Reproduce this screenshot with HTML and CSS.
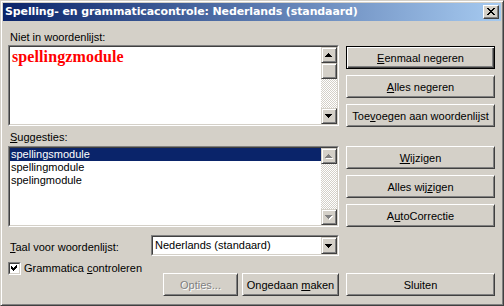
FILE: index.html
```html
<!DOCTYPE html>
<html lang="nl">
<head>
<meta charset="UTF-8">
<title>Spelling- en grammaticacontrole</title>
<link rel="stylesheet" href="styles.css">
</head>
<body>
<div class="window">
    <div class="titlebar">
        <span class="title">Spelling- en grammaticacontrole: Nederlands (standaard)</span>
        <span class="close-btn">
            <svg width="8" height="7" viewBox="0 0 8 7"><path d="M0 0h2v1h-2zM6 0h2v1h-2zM1 1h2v1h-2zM5 1h2v1h-2zM2 2h4v1h-4zM3 3h2v1h-2zM2 4h4v1h-4zM1 5h2v1h-2zM5 5h2v1h-2zM0 6h2v1h-2zM6 6h2v1h-2z" fill="#000"/></svg>
        </span>
    </div>

    <div class="dialog">
        <div class="left">
            <div class="label label-top">Niet in woordenlijst:</div>
            <div class="field field-big">
                <div class="field-inner">
                    <div class="field-text"><span class="wrong">spellingzmodule</span></div>
                    <div class="scrollbar">
                        <div class="sb-btn">
                            <svg class="arr-up" width="7" height="4" viewBox="0 0 7 4"><path d="M3 0h1v1h1v1h1v1h1v1h-7v-1h1v-1h1v-1h1z" fill="#000"/></svg>
                        </div>
                        <div class="sb-btn"></div>
                        <div class="track"></div>
                        <div class="sb-btn">
                            <svg class="arr-down" width="7" height="4" viewBox="0 0 7 4"><path d="M0 0h7v1h-1v1h-1v1h-1v1h-1v-1h-1v-1h-1v-1h-1z" fill="#000"/></svg>
                        </div>
                    </div>
                </div>
            </div>

            <div class="label label-sugg"><u>S</u>uggesties:</div>
            <div class="field field-big">
                <div class="field-inner">
                    <ul class="suggestions">
                        <li class="selected">spellingsmodule</li>
                        <li>spellingmodule</li>
                        <li>spelingmodule</li>
                    </ul>
                    <div class="scrollbar">
                        <div class="sb-btn">
                            <svg class="arr-up" width="8" height="5" viewBox="0 0 8 5"><path d="M4 1h1v1h1v1h1v1h1v1h-7v-1h1v-1h1v-1h1z" fill="#fff"/><path d="M3 0h1v1h1v1h1v1h1v1h-7v-1h1v-1h1v-1h1z" fill="#808080"/></svg>
                        </div>
                        <div class="track"></div>
                        <div class="sb-btn">
                            <svg class="arr-down" width="8" height="5" viewBox="0 0 8 5"><path d="M1 1h7v1h-1v1h-1v1h-1v1h-1v-1h-1v-1h-1v-1h-1z" fill="#fff"/><path d="M0 0h7v1h-1v1h-1v1h-1v1h-1v-1h-1v-1h-1v-1h-1z" fill="#808080"/></svg>
                        </div>
                    </div>
                </div>
            </div>

            <div class="lang-row">
                <span class="lang-label"><u>T</u>aal voor woordenlijst:</span>
                <div class="field combo">
                    <div class="field-inner">
                        <span class="combo-text">Nederlands (standaard)</span>
                        <div class="sb-btn combo-btn">
                            <svg class="arr-down" width="7" height="4" viewBox="0 0 7 4"><path d="M0 0h7v1h-1v1h-1v1h-1v1h-1v-1h-1v-1h-1v-1h-1z" fill="#000"/></svg>
                        </div>
                    </div>
                </div>
            </div>

            <div class="check-row">
                <span class="field checkbox">
                    <span class="field-inner">
                        <svg width="9" height="9" viewBox="0 0 9 9"><path d="M1 2h1v1h1v1h1v-1h1v-1h1v-1h1v3h-1v1h-1v1h-1v1h-1v-1h-1v-1h-1z" fill="#000"/></svg>
                    </span>
                </span>
                <span>Grammatica <u>c</u>ontroleren</span>
            </div>

            <div class="bottom-row">
                <div class="btn btn-options disabled"><span>Opties...</span></div>
                <div class="btn btn-undo"><span>Ongedaan <u>m</u>aken</span></div>
            </div>
        </div>

        <div class="right">
            <div class="btn default first"><span><u>E</u>enmaal negeren</span></div>
            <div class="btn"><span><u>A</u>lles negeren</span></div>
            <div class="btn"><span>Toe<u>v</u>oegen aan woordenlijst</span></div>
            <div class="btn group2"><span><u>W</u>ijzigen</span></div>
            <div class="btn"><span>Alles wij<u>z</u>igen</span></div>
            <div class="btn"><span>A<u>u</u>toCorrectie</span></div>
            <div class="btn close"><span>Sluiten</span></div>
        </div>
    </div>
</div>
</body>
</html>
```

FILE: styles.css
```css
body {
    margin: 0;
    padding: 0;
    font-family: "Liberation Sans", Arial, sans-serif;
    font-size: 11px;
    color: #000;
    background-color: #d4d0c8;
}

/* venster */
.window {
    width: 504px;
    height: 306px;
    box-sizing: border-box;
    background-color: #d4d0c8;
    border: 1px solid;
    border-color: #d4d0c8 #404040 #404040 #d4d0c8;
    box-shadow: inset 1px 1px #fff, inset -1px -1px #808080;
    padding: 2px;
}

.titlebar {
    height: 18px;
    display: flex;
    align-items: center;
    justify-content: space-between;
    background: linear-gradient(to right, #0a246a, #a6caf0);
}

.title {
    padding-left: 2px;
    color: #fff;
    font-family: "DejaVu Sans", sans-serif;
    font-weight: bold;
    font-size: 11px;
    letter-spacing: -0.12px;
    line-height: 18px;
    white-space: nowrap;
}

.close-btn {
    width: 16px;
    height: 14px;
    box-sizing: border-box;
    margin-right: 2px;
    background: #d4d0c8;
    border: 1px solid;
    border-color: #fff #404040 #404040 #fff;
    box-shadow: inset -1px -1px #808080;
    display: flex;
}

.close-btn svg {
    display: block;
    margin: 2px 0 0 3px;
}

/* inhoud */
.dialog {
    display: flex;
    gap: 7px;
    padding: 0 6px 0 5px;
}

.left {
    width: 331px;
    display: flex;
    flex-direction: column;
}

.right {
    width: 149px;
    display: flex;
    flex-direction: column;
}

.label {
    height: 13px;
    line-height: 13px;
    padding-left: 2px;
    white-space: nowrap;
}

.label-top {
    margin-top: 10px;
    margin-bottom: 1px;
}

.label-sugg {
    margin-top: 5px;
    margin-bottom: 2px;
}

/* verzonken velden */
.field {
    box-sizing: border-box;
    border: 1px solid;
    border-color: #808080 #fff #fff #808080;
    background: #fff;
}

.field-inner {
    box-sizing: border-box;
    height: 100%;
    border: 1px solid;
    border-color: #404040 #d4d0c8 #d4d0c8 #404040;
    display: flex;
}

.field-big {
    height: 81px;
}

.field-text {
    flex: 1;
    padding: 1px 2px;
}

.wrong {
    font-family: "Liberation Serif", "Times New Roman", serif;
    font-weight: bold;
    font-size: 16px;
    line-height: 18px;
    letter-spacing: 0.1px;
    color: #ff0000;
}

.suggestions {
    flex: 1;
    list-style: none;
    margin: 0;
    padding: 0;
}

.suggestions li {
    height: 13px;
    line-height: 13px;
    padding-left: 1px;
}

.suggestions li.selected {
    background: #0a246a;
    color: #fff;
}

/* schuifbalk */
.scrollbar {
    width: 16px;
    display: flex;
    flex-direction: column;
}

.sb-btn {
    width: 16px;
    height: 16px;
    box-sizing: border-box;
    flex: none;
    background: #d4d0c8;
    border: 1px solid;
    border-color: #d4d0c8 #404040 #404040 #d4d0c8;
    box-shadow: inset 1px 1px #fff, inset -1px -1px #808080;
}

.sb-btn svg {
    display: block;
}

.arr-up {
    margin: 5px 0 0 3px;
}

.arr-down {
    margin: 5px 0 0 3px;
}

.track {
    flex: 1;
    background: conic-gradient(#fff 25%, #d4d0c8 0 50%, #fff 0 75%, #d4d0c8 0);
    background-size: 2px 2px;
}

/* taal */
.lang-row {
    margin-top: 8px;
    display: flex;
    align-items: center;
}

.lang-label {
    width: 143px;
    padding-left: 2px;
    padding-top: 2px;
    box-sizing: border-box;
    white-space: nowrap;
}

.combo {
    flex: 1;
    height: 21px;
}

.combo-text {
    flex: 1;
    line-height: 17px;
    padding-left: 2px;
}

.combo-btn {
    height: 17px;
}

.combo-btn .arr-down {
    margin: 6px 0 0 3px;
}

/* selectievakje */
.check-row {
    margin-top: 6px;
    height: 13px;
    line-height: 13px;
    display: flex;
    align-items: center;
    gap: 3px;
}

.checkbox {
    display: block;
    width: 13px;
    height: 13px;
}

.checkbox svg {
    display: block;
}

/* knoppen */
.bottom-row {
    margin-top: -2px;
    display: flex;
    justify-content: flex-end;
    gap: 4px;
}

.btn {
    height: 23px;
    box-sizing: border-box;
    background: #d4d0c8;
    border: 1px solid;
    border-color: #fff #404040 #404040 #fff;
    box-shadow: inset 1px 1px #d4d0c8, inset -1px -1px #808080;
    display: flex;
    align-items: center;
    justify-content: center;
    white-space: nowrap;
    margin-top: 6px;
}

.btn.default {
    border-color: #000;
    box-shadow: inset 1px 1px #fff, inset -1px -1px #404040, inset -2px -2px #808080;
}

.right .first {
    margin-top: 25px;
}

.right .group2 {
    margin-top: 19px;
}

.right .close {
    margin-top: 46px;
}

.bottom-row .btn {
    margin-top: 0;
}

.btn-options {
    width: 75px;
}

.btn-undo {
    width: 97px;
}

.btn.disabled {
    color: #808080;
    text-shadow: 1px 1px #fff;
}
```
